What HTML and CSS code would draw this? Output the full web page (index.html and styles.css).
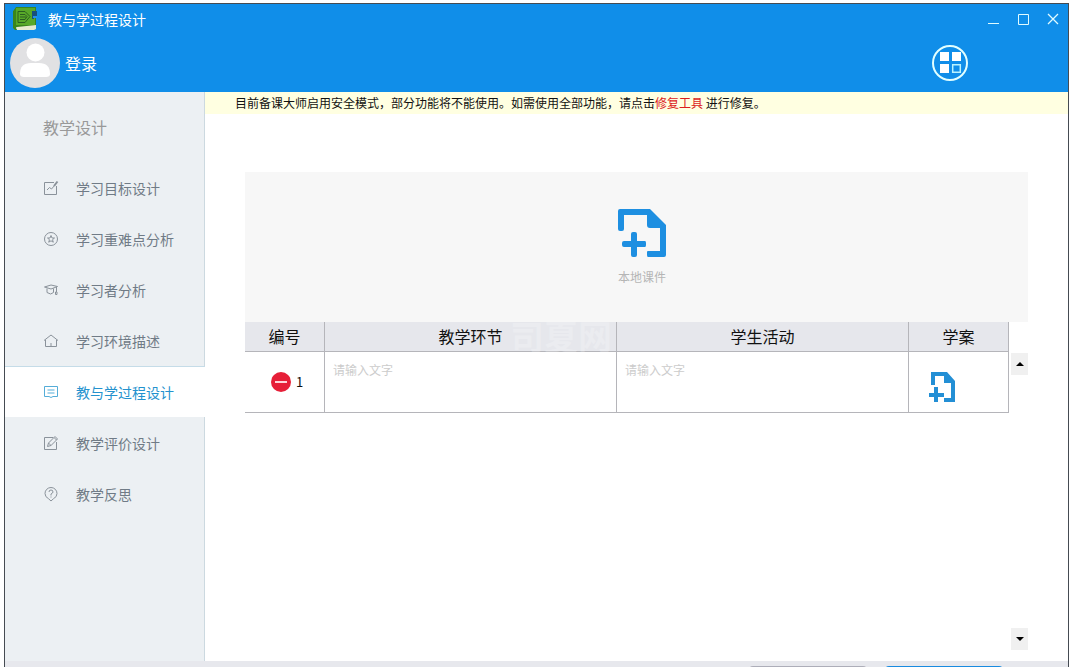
FILE: index.html
```
<!DOCTYPE html>
<html lang="zh-CN">
<head>
<meta charset="utf-8">
<meta name="viewport" content="width=device-width, initial-scale=1">
<title>教与学过程设计</title>
<link rel="stylesheet" href="styles.css">
</head>
<body>
<div class="window">
  <header class="header">
    <div class="titlebar">
      <svg class="app-logo" viewBox="0 0 24 24" aria-hidden="true">
        <path fill="#3a861c" d="M1 3L3 0H23V18L22 20H4L1 22Z"/>
        <path fill="#58a929" d="M3 1H22V18H3Z"/>
        <path fill="#e6ebcf" d="M4 20L23 18V22L21 23H4L2 21Z"/>
        <path fill="#3a861c" d="M0 4L3 1V21L4 23H2L0 21Z"/>
        <path fill="none" stroke="#2a5f20" d="M5 4.500H12L17 9.500L12 15.500H5ZM7 7.500H12L14 9.500L12 12.500H7M7 10H13"/>
        <path fill="#17507c" d="M19 4H24V9H21V12H19Z"/>
        <path fill="#2592ec" d="M20 9H24V11H20Z"/>
      </svg>
      <h1 class="title">教与学过程设计</h1>
      <div class="window-controls">
        <button class="window-button" type="button" aria-label="最小化"><svg viewBox="0 0 12 12"><path d="M1 10.500H12"/></svg></button>
        <button class="window-button" type="button" aria-label="最大化"><svg viewBox="0 0 12 12"><path d="M1.500 1.500H11.500V11.500H1.500Z"/></svg></button>
        <button class="window-button" type="button" aria-label="关闭"><svg viewBox="0 0 12 12"><path stroke-width="1.300" d="M1 1L11 11M11 1L1 11"/></svg></button>
      </div>
    </div>
    <div class="account-row">
      <button class="login" type="button">
        <svg class="avatar" viewBox="0 0 50 50" aria-hidden="true">
          <circle cx="25" cy="25" r="25" fill="#e1e1e3"/>
          <circle cx="25.500" cy="14.500" r="9" fill="#fff"/>
          <path fill="#fff" d="M10 36Q10 25 21 25H29Q40 25 40 36Q40 39 36 39H14Q10 39 10 36Z"/>
        </svg>
        <span>登录</span>
      </button>
      <button class="apps" type="button" aria-label="应用">
        <svg viewBox="0 0 36 36"><circle cx="18" cy="18" r="17" fill="none" stroke="#e2ffff" stroke-width="2"/><path fill="#fff" d="M8 7H17V16H8ZM20 7H29V16H20ZM8 19H17V28H8Z"/><path fill="none" stroke="#b9f3ff" stroke-width="1.500" d="M20.700 19.700H28.300V27.300H20.700Z"/></svg>
      </button>
    </div>
  </header>
  <div class="body">
    <nav class="sidebar" aria-label="教学设计">
      <h2 class="sidebar-title">教学设计</h2>
      <a class="nav-item" href="#goal"><svg class="nav-icon" viewBox="0 0 16 16"><path d="M11 2.500H1.500V14.500H13.500V6M4 10L6.500 7.500L8.500 9L12 5"/><path stroke-width="2" d="M11 6L14.500 1.500"/></svg>学习目标设计</a>
      <a class="nav-item" href="#keypoints"><svg class="nav-icon" viewBox="0 0 16 16"><circle cx="8" cy="8" r="6.500"/><path d="M8 4.500L9 7H11.500L9.500 8.700L10.300 11.200L8 9.800L5.700 11.200L6.500 8.700L4.500 7H7Z"/></svg>学习重难点分析</a>
      <a class="nav-item" href="#learner"><svg class="nav-icon" viewBox="0 0 16 16"><path d="M1.500 5L8 3L14.500 4.500L8 7ZM4 6.500V10.500Q8 13.500 10.500 10.500V6.500M13.500 5V10M12.500 10H14V12.500H12.500Z"/></svg>学习者分析</a>
      <a class="nav-item" href="#environment"><svg class="nav-icon" viewBox="0 0 16 16"><path d="M1 7.500L8 2L15 7.500M2.500 7V13.500H13.500V7M8 10V13.500"/></svg>学习环境描述</a>
      <a class="nav-item nav-item-active" href="#process" aria-current="page"><svg class="nav-icon" viewBox="0 0 16 16"><path d="M1.500 2.500H14.500V12.500H10L8 13.500L6 12.500H1.500ZM4.500 6H11.500M4.500 9H11.500"/></svg>教与学过程设计</a>
      <a class="nav-item" href="#evaluation"><svg class="nav-icon" viewBox="0 0 16 16"><path d="M10 2.500H1.500V14.500H13.500V7M4.500 11.500L5.500 8L12 1.500L14.500 4L8 10.500ZM5.500 8L8 10.500M11 2.500L13.500 5"/></svg>教学评价设计</a>
      <a class="nav-item" href="#reflection"><svg class="nav-icon" viewBox="0 0 16 16"><path d="M8 15L5.500 12.700Q2 11 2 7.500A6 6 0 0 1 14 7.500Q14 11 10.500 12.700ZM6 6Q6 4 8 4T10 6Q10 7 8 8V9.500M8 10.500V11.500"/></svg>教学反思</a>
    </nav>
    <main class="main">
      <p class="notice">目前备课大师启用安全模式，部分功能将不能使用。如需使用全部功能，请点击<a class="notice-link" href="#repair">修复工具</a> 进行修复。</p>
      <div class="workspace">
        <div class="upload">
          <button class="upload-button" type="button">
            <svg class="upload-icon" viewBox="0 0 48 48" aria-hidden="true">
              <path fill="currentColor" d="M2 0H32L48 16V46Q48 48 46 48H30Q29 48 29 46V43Q29 42 30 42H42V19H32Q29 19 29 16V6H6V20Q6 22 4 22H2Q0 22 0 20V2Q0 0 2 0Z"/>
              <path fill="currentColor" d="M15 23H17Q19 23 19 25V32H27Q28 32 28 34V36Q28 38 27 38H19V46Q19 48 17 48H15Q13 48 13 46V38H6Q4 38 4 36V34Q4 32 6 32H13V25Q13 23 15 23Z"/>
            </svg>
            <span>本地课件</span>
          </button>
        </div>
        <div class="table-area">
          <table class="plan">
            <colgroup><col class="col-number"><col><col><col class="col-file"></colgroup>
            <thead><tr><th scope="col">编号</th><th scope="col" class="marked">教学环节<span class="watermark" aria-hidden="true">司夏网</span></th><th scope="col">学生活动</th><th scope="col">学案</th></tr></thead>
            <tbody><tr>
              <td><div class="row-number"><button class="remove" type="button" aria-label="删除第1行"><svg viewBox="0 0 20 20"><circle cx="10" cy="10" r="10" fill="#e61f38"/><path stroke="#ffd5da" stroke-width="2" d="M4 10H16"/></svg></button><span>1</span></div></td>
              <td><textarea class="entry" aria-label="教学环节" placeholder="请输入文字"></textarea></td>
              <td><textarea class="entry" aria-label="学生活动" placeholder="请输入文字"></textarea></td>
              <td><button class="row-file" type="button" aria-label="添加学案"><svg viewBox="0 0 26 30"><path fill="currentColor" d="M2 0H18L26 9V30H15V26H22V11H15V4H6V13H2ZM5 15H9V21H15V25H9V30H5V25H0V21H5Z"/></svg></button></td>
            </tr></tbody>
          </table>
          <div class="scroll">
            <button class="scroll-button" type="button" aria-label="向上滚动"><svg viewBox="0 0 8 4"><path d="M0 4L4 0L8 4Z"/></svg></button>
            <button class="scroll-button" type="button" aria-label="向下滚动"><svg viewBox="0 0 8 4"><path d="M0 0L4 4L8 0Z"/></svg></button>
          </div>
        </div>
      </div>
    </main>
  </div>
  <footer class="footer">
    <button class="footer-button" type="button" aria-label="上一步"></button>
    <button class="footer-button footer-button-primary" type="button" aria-label="下一步"></button>
  </footer>
</div>
</body>
</html>
```
FILE: styles.css
```
* { box-sizing: border-box; }

body {
  margin: 0;
  height: 100vh;
  padding: 3px 8px 0 4px;
  overflow: hidden;
  background: #fff;
  color: #111;
  font: 14px/20px "Noto Sans CJK SC", sans-serif;
}

button {
  padding: 0;
  border: 0;
  background: none;
  color: inherit;
  font: inherit;
  cursor: pointer;
}

svg { display: block; }
h1, h2, p { margin: 0; font-weight: 400; }
a { color: inherit; text-decoration: none; }

.window {
  display: flex;
  flex-direction: column;
  height: 100%;
  border: 1px solid #454b52;
  border-bottom: 0;
}

.header { background: #108ee9; color: #fff; }

.titlebar {
  display: flex;
  align-items: center;
  gap: 11px;
  height: 30px;
  padding: 0 9px 0 8px;
}

.app-logo { width: 24px; height: 24px; }
.title { font-size: 14px; line-height: 20px; }
.window-controls { display: flex; gap: 18px; margin-left: auto; }
.window-button svg { width: 12px; height: 12px; fill: none; stroke: #e0fbff; }

.account-row {
  display: flex;
  align-items: center;
  justify-content: space-between;
  height: 58px;
  padding: 0 100px 0 5px;
}

.login { display: flex; align-items: center; gap: 5px; font-size: 16px; line-height: 24px; }
.avatar { width: 50px; height: 50px; }
.apps svg { width: 36px; height: 36px; }

.body { display: flex; flex: 1; min-height: 0; }

.sidebar {
  flex: none;
  width: 200px;
  background: linear-gradient(to left, #ccd9e0 1px, #ecf0f3 1px);
}

.sidebar-title {
  padding: 23px 0 23px 38px;
  color: #999;
  font-size: 16px;
  line-height: 24px;
}

.nav-item {
  display: flex;
  align-items: center;
  gap: 17px;
  height: 51px;
  padding-left: 38px;
  color: #707b86;
}

.nav-icon { width: 16px; height: 16px; fill: none; stroke: #8a929a; }
.nav-item-active { border-top: 1px solid #c5dce8; background: #fff; color: #2492ce; }
.nav-item-active .nav-icon { stroke: #55add8; }

.main { display: flex; flex: 1; flex-direction: column; min-width: 0; background: #fff; }

.notice {
  padding: 1px 30px;
  background: #ffffe1;
  font-size: 12px;
  line-height: 20px;
}

.notice-link { color: #dc1c1c; }
.workspace { display: flex; flex: 1; flex-direction: column; min-height: 0; padding: 58px 40px 11px 40px; }

.upload {
  display: flex;
  align-items: center;
  justify-content: center;
  height: 150px;
  padding: 2px 0 0 11px;
  background: #f7f7f7;
}

.upload-button { display: flex; flex-direction: column; align-items: center; gap: 10px; color: #b5b5b5; font-size: 12px; line-height: 20px; }
.upload-icon { width: 48px; height: 48px; color: #1e8fe1; }

.table-area { display: flex; flex: 1; gap: 2px; min-height: 0; }

.plan {
  flex: 1;
  align-self: flex-start;
  min-width: 0;
  border-collapse: separate;
  border-spacing: 0;
  table-layout: fixed;
}

.col-number { width: 80px; }
.col-file { width: 100px; }
.plan th, .plan td { padding: 0; border: solid #b5b5ba; border-width: 0 1px 1px 0; }
.plan th { height: 30px; padding-bottom: 2px; background: #e6e7ec; color: #111; font-size: 16px; font-weight: 400; line-height: 24px; }
.plan td { height: 61px; }

.marked { position: relative; }
.watermark {
  position: absolute;
  top: 0;
  right: 4px;
  color: rgb(255 255 255 / 22%);
  font-size: 34px;
  font-weight: 700;
  line-height: 28px;
  pointer-events: none;
}

.row-number { display: flex; align-items: center; gap: 5px; padding-left: 26px; font-size: 13px; }
.remove svg { width: 20px; height: 20px; }

.entry {
  display: block;
  width: 100%;
  height: 60px;
  padding: 8px;
  border: 0;
  resize: none;
  background: transparent;
  font: 12px/20px "Noto Sans CJK SC", sans-serif;
}

.entry::placeholder { color: #ccc; }
.row-file { display: block; margin: 10px 0 0 20px; }
.row-file svg { width: 26px; height: 30px; color: #238fd5; }

.scroll { display: flex; flex: none; flex-direction: column; justify-content: space-between; padding-top: 31px; }
.scroll-button { display: grid; place-items: center; width: 17px; height: 22px; background: #f0f0f0; }
.scroll-button svg { width: 8px; height: 4px; }

.footer {
  display: flex;
  flex: none;
  justify-content: flex-end;
  gap: 18px;
  height: 6px;
  padding: 5px 65px 0 0;
  overflow: hidden;
  background: #e7e8ed;
}

.footer-button { width: 118px; height: 32px; border-radius: 4px; background: #adaeb9; }
.footer-button-primary { background: #198be0; }
```
